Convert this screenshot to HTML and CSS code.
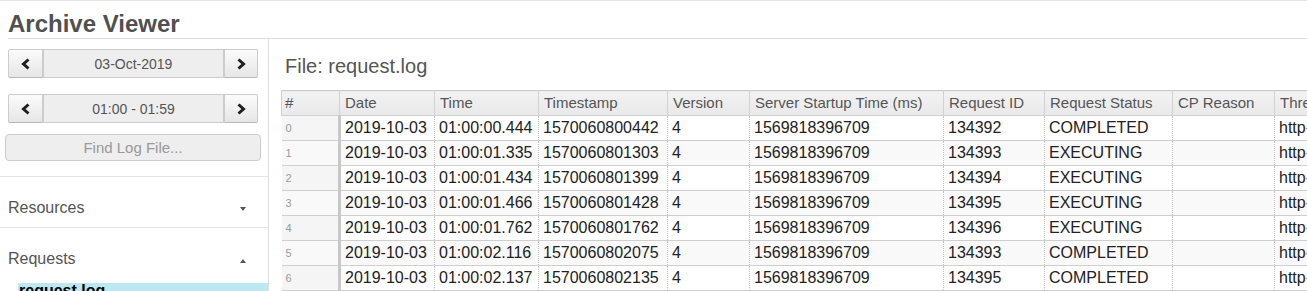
FILE: index.html
```html
<!DOCTYPE html>
<html lang="en">
<head>
    <meta charset="UTF-8">
    <title>Archive Viewer</title>
    <link rel="stylesheet" href="styles.css">
</head>
<body>

    <h1 class="app-title">Archive Viewer</h1>

    <div class="layout">
        <div class="sidebar">
            <div class="btn-group">
                <button class="btn btn-arrow" type="button">
                    <svg width="12" height="12" viewBox="0 0 12 12"><polyline points="8.5,1.5 3.5,6 8.5,10.5" fill="none" stroke="#1e1e1e" stroke-width="3"/></svg>
                </button>
                <div class="btn-label">03-Oct-2019</div>
                <button class="btn btn-arrow" type="button">
                    <svg width="12" height="12" viewBox="0 0 12 12"><polyline points="3.5,1.5 8.5,6 3.5,10.5" fill="none" stroke="#1e1e1e" stroke-width="3"/></svg>
                </button>
            </div>
            <div class="btn-group">
                <button class="btn btn-arrow" type="button">
                    <svg width="12" height="12" viewBox="0 0 12 12"><polyline points="8.5,1.5 3.5,6 8.5,10.5" fill="none" stroke="#1e1e1e" stroke-width="3"/></svg>
                </button>
                <div class="btn-label">01:00 - 01:59</div>
                <button class="btn btn-arrow" type="button">
                    <svg width="12" height="12" viewBox="0 0 12 12"><polyline points="3.5,1.5 8.5,6 3.5,10.5" fill="none" stroke="#1e1e1e" stroke-width="3"/></svg>
                </button>
            </div>
            <input class="find-input" type="text" placeholder="Find Log File..." disabled>

            <div class="nav">
                <div class="nav-section">
                    <div class="nav-header">Resources <span class="caret caret-down"></span></div>
                </div>
                <div class="nav-section open">
                    <div class="nav-header">Requests <span class="caret caret-up"></span></div>
                    <div class="nav-item active">request.log</div>
                </div>
            </div>
        </div>

        <div class="main">
            <h3 class="file-title">File: request.log</h3>
            <table class="log-table">
                <colgroup>
                    <col style="width: 58px">
                    <col style="width: 95px">
                    <col style="width: 104px">
                    <col style="width: 129px">
                    <col style="width: 82px">
                    <col style="width: 194px">
                    <col style="width: 101px">
                    <col style="width: 128px">
                    <col style="width: 102px">
                    <col style="width: 300px">
                </colgroup>
                <thead>
                    <tr>
                        <th>#</th>
                        <th>Date</th>
                        <th>Time</th>
                        <th>Timestamp</th>
                        <th>Version</th>
                        <th>Server Startup Time (ms)</th>
                        <th>Request ID</th>
                        <th>Request Status</th>
                        <th>CP Reason</th>
                        <th>Thread</th>
                    </tr>
                </thead>
                <tbody>
                    <tr>
                        <td class="row-num">0</td><td class="first">2019-10-03</td><td>01:00:00.444</td><td>1570060800442</td><td>4</td><td>1569818396709</td><td>134392</td><td>COMPLETED</td><td></td><td>http-nio-8080-exec-1</td>
                    </tr>
                    <tr>
                        <td class="row-num">1</td><td class="first">2019-10-03</td><td>01:00:01.335</td><td>1570060801303</td><td>4</td><td>1569818396709</td><td>134393</td><td>EXECUTING</td><td></td><td>http-nio-8080-exec-2</td>
                    </tr>
                    <tr>
                        <td class="row-num">2</td><td class="first">2019-10-03</td><td>01:00:01.434</td><td>1570060801399</td><td>4</td><td>1569818396709</td><td>134394</td><td>EXECUTING</td><td></td><td>http-nio-8080-exec-3</td>
                    </tr>
                    <tr>
                        <td class="row-num">3</td><td class="first">2019-10-03</td><td>01:00:01.466</td><td>1570060801428</td><td>4</td><td>1569818396709</td><td>134395</td><td>EXECUTING</td><td></td><td>http-nio-8080-exec-4</td>
                    </tr>
                    <tr>
                        <td class="row-num">4</td><td class="first">2019-10-03</td><td>01:00:01.762</td><td>1570060801762</td><td>4</td><td>1569818396709</td><td>134396</td><td>EXECUTING</td><td></td><td>http-nio-8080-exec-5</td>
                    </tr>
                    <tr>
                        <td class="row-num">5</td><td class="first">2019-10-03</td><td>01:00:02.116</td><td>1570060802075</td><td>4</td><td>1569818396709</td><td>134393</td><td>COMPLETED</td><td></td><td>http-nio-8080-exec-2</td>
                    </tr>
                    <tr>
                        <td class="row-num">6</td><td class="first">2019-10-03</td><td>01:00:02.137</td><td>1570060802135</td><td>4</td><td>1569818396709</td><td>134395</td><td>COMPLETED</td><td></td><td>http-nio-8080-exec-4</td>
                    </tr>
                </tbody>
            </table>
        </div>
    </div>

</body>
</html>
```

FILE: styles.css
```css
body {
    font-family: "Liberation Sans", Arial, sans-serif;
    margin: 0;
    border-top: 1px solid #e3e3e3;
    color: #555;
    overflow: hidden;
}
.app-title {
    margin: 0 0 0 8px;
    padding-top: 9px;
    font-size: 24px;
    line-height: 28px;
    font-weight: bold;
    color: #505050;
    border-bottom: 1px solid #ddd;
}
.layout {
    display: flex;
    align-items: stretch;
    min-height: 260px;
}
.sidebar {
    width: 268px;
    flex-shrink: 0;
    border-right: 1px solid #ddd;
    padding-top: 10px;
}
.btn-group {
    display: flex;
    width: 250px;
    height: 29px;
    margin: 0 0 16px 8px;
}
.btn-group + .btn-group {
    margin-bottom: 11px;
}
.btn {
    margin: 0;
    padding: 0;
    font: inherit;
}
.btn-arrow {
    width: 35px;
    height: 29px;
    display: flex;
    align-items: center;
    justify-content: center;
    background: linear-gradient(#fbfbfb, #e6e6e6);
    border: 1px solid #ccc;
    border-bottom-color: #b8b8b8;
    cursor: pointer;
}
.btn-arrow:first-child {
    border-radius: 2px 0 0 2px;
}
.btn-arrow:last-child {
    width: 34px;
    border-radius: 0 2px 2px 0;
}
.btn-label {
    flex: 1;
    background-color: #eee;
    border-top: 1px solid #ccc;
    border-bottom: 1px solid #ccc;
    margin: 0 1px;
    box-shadow: -1px 0 0 #ccc, 1px 0 0 #ccc;
    text-align: center;
    font-size: 14px;
    line-height: 28px;
    color: #555;
}
.find-input {
    display: block;
    box-sizing: border-box;
    width: 256px;
    height: 27px;
    margin: 0 0 15px 5px;
    padding: 0 6px;
    background-color: #eee;
    border: 1px solid #ccc;
    border-radius: 4px;
    font-family: inherit;
    font-size: 15px;
    text-align: center;
}
.find-input::placeholder {
    color: #999;
}
.nav {
    border-top: 1px solid #e5e5e5;
}
.nav-header {
    display: flex;
    justify-content: space-between;
    align-items: center;
    padding: 22px 22px 10px 8px;
    font-size: 16px;
    line-height: 18px;
    color: #555;
}
.nav-section {
    border-bottom: 1px solid #e5e5e5;
}
.nav-section.open {
    border-bottom: none;
}
.caret {
    display: inline-block;
    width: 0;
    height: 0;
    border-left: 3px solid transparent;
    border-right: 3px solid transparent;
}
.caret-down {
    border-top: 4px solid #555;
    margin-top: 1px;
}
.caret-up {
    border-bottom: 4px solid #555;
    margin-top: 3px;
}
.nav-item {
    margin: 5px 0 0 18px;
    padding-left: 1px;
    font-size: 16px;
    line-height: 16px;
    height: 20px;
    font-weight: bold;
    color: #000;
}
.nav-item.active {
    background-color: #bce8f1;
}
.main {
    flex: 1;
    overflow: hidden;
    padding: 16px 0 0 12px;
}
.file-title {
    margin: 0 0 13px 4px;
    font-size: 20px;
    line-height: 22px;
    font-weight: normal;
    color: #555;
}
.log-table {
    table-layout: fixed;
    width: 1293px;
    border-collapse: collapse;
}
.log-table th {
    height: 24px;
    padding: 0 5px;
    text-align: left;
    font-size: 15px;
    font-weight: normal;
    line-height: 24px;
    color: #555;
    background: linear-gradient(#f2f2f2, #e9e9e9);
    border: 1px solid #d2d2d2;
    border-top-color: #c8c8c8;
    white-space: nowrap;
    overflow: hidden;
}
.log-table th:first-child {
    padding-left: 3px;
}
.log-table td {
    height: 24px;
    padding: 0 4px;
    font-size: 16px;
    line-height: 24px;
    color: #222;
    border-top: 1px solid #cfcfcf;
    border-bottom: 1px solid #cfcfcf;
    border-left: 1px dotted #c4c4c4;
    border-right: 1px dotted #c4c4c4;
    white-space: nowrap;
    overflow: hidden;
}
.log-table tbody tr:nth-child(even) td {
    background-color: #f9f9f9;
}
.log-table td.row-num {
    font-size: 11px;
    color: #999;
    background-color: #f5f5f5;
    border-left: none;
    border-right: 3px solid #c8c8c8;
}
.log-table td.first {
    border-left: 3px solid #c8c8c8;
}
```
